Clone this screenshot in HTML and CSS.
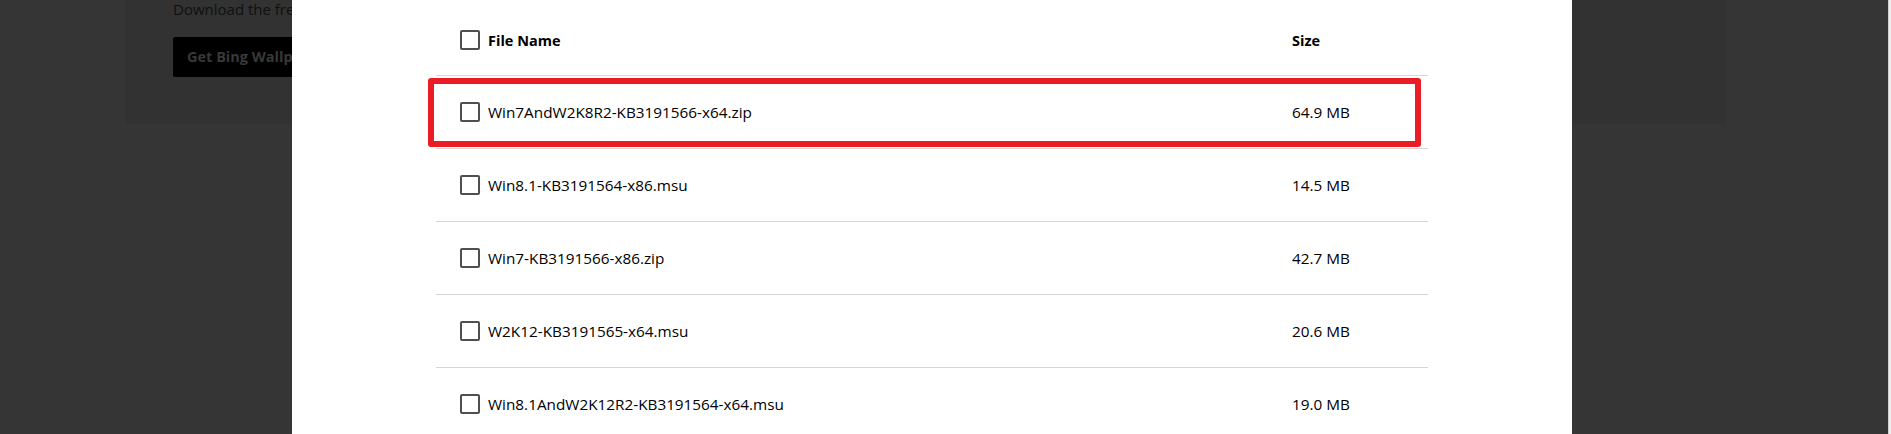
FILE: index.html
```html
<!DOCTYPE html>
<html lang="en">
<head>
<meta charset="utf-8">
<title>Download files</title>
<link rel="stylesheet" href="styles.css">
</head>
<body>
<div class="page">
  <div class="hero">
    <p class="hero-text">Download the free Bing Wallpaper app</p>
    <a class="hero-btn" href="#">Get Bing Wallpaper</a>
  </div>
</div>
<div class="scroll-edge"></div>

<div class="modal">
  <div class="files">
    <div class="row head">
      <label class="name"><span class="check"></span><span>File Name</span></label>
      <span class="size">Size</span>
    </div>
    <div class="row marked">
      <label class="name"><span class="check"></span><span>Win7AndW2K8R2-KB3191566-x64.zip</span></label>
      <span class="size">64.9 MB</span>
      <div class="highlight"></div>
    </div>
    <div class="row">
      <label class="name"><span class="check"></span><span>Win8.1-KB3191564-x86.msu</span></label>
      <span class="size">14.5 MB</span>
    </div>
    <div class="row">
      <label class="name"><span class="check"></span><span>Win7-KB3191566-x86.zip</span></label>
      <span class="size">42.7 MB</span>
    </div>
    <div class="row">
      <label class="name"><span class="check"></span><span>W2K12-KB3191565-x64.msu</span></label>
      <span class="size">20.6 MB</span>
    </div>
    <div class="row">
      <label class="name"><span class="check"></span><span>Win8.1AndW2K12R2-KB3191564-x64.msu</span></label>
      <span class="size">19.0 MB</span>
    </div>
  </div>
</div>
</body>
</html>
```

FILE: styles.css
```css
* { box-sizing: border-box; }

html, body {
  margin: 0;
  height: 100%;
  overflow: hidden;
}

body {
  background: #353535;
  font-family: "Open Sans", "Noto Sans", sans-serif;
  position: relative;
}

.page {
  padding: 0 166px 0 125px;
}

.hero {
  background: #323232;
  height: 125px;
  padding: 0 48px;
}

.hero-text {
  margin: -1px 0 0;
  font-size: 15px;
  line-height: 20px;
  color: #101010;
  white-space: nowrap;
}

.hero-btn {
  display: inline-block;
  margin-top: 18px;
  height: 40px;
  line-height: 40px;
  padding: 0 14px;
  background: #000;
  color: #383838;
  font-weight: 700;
  font-size: 14.5px;
  text-decoration: none;
  border-radius: 2px;
}

.scroll-edge {
  position: absolute;
  right: 0;
  top: 0;
  width: 3px;
  height: 100%;
  background: #ededed;
  border-left: 1px solid #d0d0d0;
}

.modal {
  position: absolute;
  left: 292px;
  top: 0;
  width: 1280px;
  height: 100%;
  background: #fff;
  padding: 0 144px;
}

.files {
  color: #000;
  font-size: 15.3px;
}

.row {
  position: relative;
  display: grid;
  grid-template-columns: 856px 1fr;
  align-items: center;
  height: 73px;
  border-bottom: 1px solid #d6d6d6;
}

.row.head {
  height: 76px;
  padding-top: 5px;
  font-weight: 700;
  font-size: 14.5px;
}

.name {
  display: flex;
  align-items: center;
  gap: 8px;
  padding-left: 24px;
}

.check {
  width: 20px;
  height: 20px;
  border: 2px solid #4f4f4f;
  border-radius: 2px;
  flex: none;
}

.highlight {
  position: absolute;
  left: -8px;
  top: 2px;
  width: 993px;
  height: 69px;
  border: 6px solid #ec1c27;
  border-radius: 3px;
  pointer-events: none;
}
```
